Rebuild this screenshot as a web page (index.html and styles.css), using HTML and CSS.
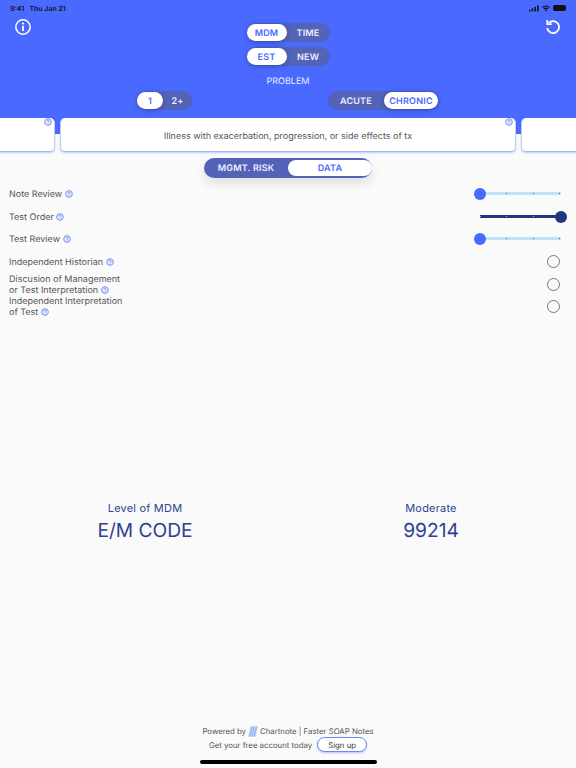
FILE: index.html
```html
<!DOCTYPE html>
<html lang="en">
<head>
    <meta charset="UTF-8">
    <meta name="viewport" content="width=device-width, initial-scale=1.0">
    <title>E/M Code Calculator</title>
    <link rel="stylesheet" href="styles.css">
</head>
<body>
    <svg class="hidden" width="0" height="0">
        <symbol id="help" viewBox="0 0 16 16">
            <circle cx="8" cy="8" r="6.700" fill="#e4e9fd" stroke="currentColor" stroke-width="1.700"/>
            <path d="M5.700 6.300C5.800 4.900 6.800 4.200 8 4.200c1.300 0 2.300.8 2.300 2 0 1-.6 1.500-1.300 2-.7.5-1 .9-1 1.700" fill="none" stroke="currentColor" stroke-width="1.400"/>
            <circle cx="8" cy="11.800" r=".9" fill="currentColor"/>
        </symbol>
    </svg>

    <header class="top">
        <div class="status-bar">
            <span>9:41&nbsp;&nbsp; Thu Jan 21</span>
            <div class="status-icons">
                <svg width="10" height="7" viewBox="0 0 13 8"><path d="M0 5.500h2V8H0zM3.500 4h2v4h-2zM7 2h2v6H7zM10.500 0h2v8h-2z" fill="#111"/></svg>
                <svg width="8" height="7" viewBox="0 0 12 9"><path d="M6 9L4.200 6.900a2.700 2.700 0 0 1 3.600 0zM3.300 5.900L2.100 4.600a5.800 5.800 0 0 1 7.800 0L8.700 5.900a4.100 4.100 0 0 0-5.400 0zM1.300 3.700L0 2.400a8.800 8.800 0 0 1 12 0l-1.300 1.300a7 7 0 0 0-9.400 0z" fill="#111"/></svg>
                <div class="battery"></div>
            </div>
        </div>

        <div class="top-main">
            <svg class="top-icon" width="18" height="18" viewBox="0 0 18 18">
                <circle cx="9" cy="9" r="7.200" fill="none" stroke="#fff" stroke-width="1.500"/>
                <circle cx="9" cy="5.500" r="1.100" fill="#fff"/>
                <path d="M9 7.800v5.200" stroke="#fff" stroke-width="1.800"/>
            </svg>
            <div class="top-toggles">
                <div class="segment">
                    <div class="seg-item seg-on seg-w40">MDM</div>
                    <div class="seg-item seg-w43">TIME</div>
                </div>
                <div class="segment">
                    <div class="seg-item seg-on seg-w40">EST</div>
                    <div class="seg-item seg-w43">NEW</div>
                </div>
                <div class="section-label">PROBLEM</div>
            </div>
            <svg class="top-icon" width="18" height="18" viewBox="0 0 18 18">
                <path d="M4.800 4.900A6 6 0 1 1 3.200 10" fill="none" stroke="#fff" stroke-width="1.800"/>
                <path d="M3.300 2v4.200h4.400" fill="none" stroke="#fff" stroke-width="1.800"/>
            </svg>
        </div>

        <div class="problem-row">
            <div class="segment">
                <div class="seg-item seg-on seg-w26">1</div>
                <div class="seg-item seg-w29">2+</div>
            </div>
            <div class="segment">
                <div class="seg-item seg-w56">ACUTE</div>
                <div class="seg-item seg-on seg-w54">CHRONIC</div>
            </div>
        </div>
    </header>

    <div class="cards">
        <div class="card card-left"><svg class="help card-help"><use href="#help"/></svg></div>
        <div class="card">Illness with exacerbation, progression, or side effects of tx<svg class="help card-help"><use href="#help"/></svg></div>
        <div class="card card-right"></div>
    </div>

    <div class="tab-wrap">
        <div class="tabs">
            <div class="tab">MGMT. RISK</div>
            <div class="tab tab-on">DATA</div>
        </div>
    </div>

    <div class="rows">
        <div class="row">
            <div class="row-label">Note Review <svg class="help"><use href="#help"/></svg></div>
            <div class="slider">
                <div class="track"><i></i><i></i><i></i></div>
                <div class="thumb"></div>
            </div>
        </div>
        <div class="row">
            <div class="row-label">Test Order <svg class="help"><use href="#help"/></svg></div>
            <div class="slider slider-max">
                <div class="track"><i></i><i></i><i></i><i></i></div>
                <div class="thumb"></div>
            </div>
        </div>
        <div class="row">
            <div class="row-label">Test Review <svg class="help"><use href="#help"/></svg></div>
            <div class="slider">
                <div class="track"><i></i><i></i><i></i></div>
                <div class="thumb"></div>
            </div>
        </div>
        <div class="row">
            <div class="row-label">Independent Historian <svg class="help"><use href="#help"/></svg></div>
            <div class="radio"></div>
        </div>
        <div class="row">
            <div class="row-label">Discusion of Management<br>or Test Interpretation <svg class="help"><use href="#help"/></svg></div>
            <div class="radio"></div>
        </div>
        <div class="row">
            <div class="row-label">Independent Interpretation<br>of Test <svg class="help"><use href="#help"/></svg></div>
            <div class="radio"></div>
        </div>
    </div>

    <div class="results">
        <div class="result">
            <div class="result-small">Level of MDM</div>
            <div class="result-big">E/M CODE</div>
        </div>
        <div class="result">
            <div class="result-small">Moderate</div>
            <div class="result-big">99214</div>
        </div>
    </div>

    <footer class="footer">
        <div class="footer-line">Powered by
            <svg class="logo" width="10" height="11" viewBox="0 0 10 11">
                <path d="M2.500 0h7.500L7.500 11H0z" fill="#c3d6f8"/>
                <path d="M3.700 1L2 10M6 1L4.300 10M8.200 1L6.500 10" stroke="#7d9ee8" stroke-width=".7"/>
            </svg>
            Chartnote | Faster SOAP Notes</div>
        <div class="footer-line">Get your free account today <div class="signup">Sign up</div></div>
        <div class="home-bar"></div>
    </footer>
</body>
</html>
```

FILE: styles.css
```css
* {
    box-sizing: border-box;
}
body {
    margin: 0;
    width: 576px;
    height: 768px;
    overflow: hidden;
    display: flex;
    flex-direction: column;
    background-color: #fafafa;
    font-family: Inter, "Liberation Sans", sans-serif;
    color: #555;
    text-rendering: geometricPrecision;
}
.hidden {
    position: absolute;
}
.top {
    height: 134px;
    flex-shrink: 0;
    background-color: #4a69ff;
    color: #fff;
}
.status-bar {
    height: 14px;
    padding: 2px 10px 0 10px;
    display: flex;
    justify-content: space-between;
    align-items: center;
    font-size: 7px;
    font-weight: 600;
    color: #111;
}
.status-icons {
    display: flex;
    align-items: center;
    gap: 3px;
}
.battery {
    width: 13px;
    height: 6px;
    border-radius: 2px;
    background-color: #111;
}
.top-main {
    display: flex;
    justify-content: space-between;
    padding: 0 14px;
}
.top-icon {
    margin-top: 4px;
}
.top-toggles {
    padding-top: 9px;
    display: flex;
    flex-direction: column;
    align-items: center;
    gap: 5px;
}
.section-label {
    font-size: 9px;
    line-height: 12px;
    margin-top: 5px;
    color: #e8ecff;
}
.problem-row {
    margin-top: 3px;
    padding: 0 137px;
    display: flex;
    justify-content: space-between;
}
.segment {
    display: flex;
    height: 19px;
    border-radius: 10px;
    background-color: #5263b8;
    font-size: 9px;
    font-weight: 600;
    letter-spacing: .2px;
}
.seg-item {
    display: flex;
    align-items: center;
    justify-content: center;
    padding-top: 1px;
    color: #eef0fb;
    border-radius: 10px;
}
.seg-on {
    margin: 1px 0;
    height: 17px;
    background-color: #fff;
    color: #4a69ff;
    box-shadow: 0 1px 5px rgba(30, 40, 110, .45);
}
.seg-w26 { width: 26px; }
.seg-w29 { width: 29px; }
.seg-w40 { width: 40px; }
.seg-w43 { width: 43px; }
.seg-w54 { width: 54px; margin-right: 1px; }
.seg-w56 { width: 56px; }
.cards {
    margin-top: -16px;
    height: 34px;
    display: grid;
    grid-template-columns: 55px 456px 55px;
    column-gap: 5px;
    flex-shrink: 0;
}
.card {
    position: relative;
    display: flex;
    align-items: center;
    justify-content: center;
    padding-top: 3px;
    background-color: #fff;
    border-radius: 5px;
    border-bottom: 1px solid #a8b4ee;
    border-right: 1px solid #c4ccf4;
    border-left: 1px solid #c4ccf4;
    box-shadow: 0 1px 2px rgba(74, 105, 255, .35);
    font-size: 9px;
}
.card-left {
    border-left: none;
    border-radius: 0 5px 5px 0;
}
.card-right {
    border-right: none;
    border-radius: 5px 0 0 5px;
}
.help {
    width: 8px;
    height: 8px;
    color: #6a82ef;
    vertical-align: -1px;
}
.card-help {
    position: absolute;
    top: 0;
    right: 2px;
}
.tab-wrap {
    display: flex;
    justify-content: center;
    margin-top: 6px;
}
.tabs {
    width: 168px;
    height: 20px;
    display: flex;
    border-radius: 10px;
    background-color: #5263b8;
    font-size: 9px;
    font-weight: 600;
    letter-spacing: .2px;
    box-shadow: 0 6px 10px rgba(60, 60, 60, .12);
}
.tab {
    flex: 0 0 84px;
    display: flex;
    align-items: center;
    justify-content: center;
    padding-top: 1px;
    color: #eef0fb;
}
.tab-on {
    margin: 2px 2px 2px 0;
    border-radius: 9px;
    background-color: #fff;
    color: #4a69ff;
}
.rows {
    margin-top: 5px;
    padding: 0 16px 0 9px;
}
.row {
    height: 22.500px;
    display: flex;
    align-items: center;
    justify-content: space-between;
}
.row-label {
    padding-top: 3px;
    font-size: 9px;
    line-height: 10.800px;
}
.slider {
    position: relative;
    width: 93px;
    margin-right: -7px;
    height: 12px;
}
.track {
    position: absolute;
    top: 4px;
    left: 6px;
    width: 81px;
    height: 3px;
    background-color: #bfe2fb;
}
.track i {
    position: absolute;
    top: 1px;
    width: 1px;
    height: 1px;
    background-color: #44568f;
}
.track i:nth-child(1) { left: 26px; }
.track i:nth-child(2) { left: 53px; }
.track i:nth-child(3) { left: 79px; }
.track i:nth-child(4) { left: 0; }
.thumb {
    position: absolute;
    top: 0;
    left: 0;
    width: 12px;
    height: 12px;
    border-radius: 50%;
    background-color: #4a69ff;
}
.slider-max .track {
    top: 4.500px;
    height: 3px;
    background-color: #24357f;
}
.slider-max .track i {
    top: 1px;
    background-color: #a8b6e8;
}
.slider-max .thumb {
    left: 81px;
    background-color: #24357f;
}
.radio {
    width: 13px;
    height: 13px;
    border-radius: 50%;
    border: 1.500px solid #777;
    margin-right: .5px;
}
.results {
    margin-top: 183px;
    padding: 0 2px;
    display: grid;
    grid-template-columns: 1fr 1fr;
}
.result {
    text-align: center;
    color: #2f3f92;
}
.result-small {
    font-size: 11px;
    line-height: 14px;
    letter-spacing: .2px;
}
.result-big {
    margin-top: 3px;
    font-size: 19.200px;
    line-height: 24px;
}
.footer {
    margin-top: auto;
    padding-bottom: 4px;
    display: flex;
    flex-direction: column;
    align-items: center;
    font-size: 7.800px;
}
.footer-line {
    display: flex;
    align-items: center;
    gap: 2px;
    height: 12px;
}
.footer-line + .footer-line {
    height: 15px;
}
.logo {
    flex-shrink: 0;
}
.signup {
    width: 50px;
    height: 15px;
    margin-left: 3px;
    display: flex;
    align-items: center;
    justify-content: center;
    border-radius: 8px;
    background-color: #fff;
    border: 1px solid #6f86ee;
    color: #333;
    box-shadow: 0 1px 2px rgba(74, 105, 255, .4);
}
.home-bar {
    width: 177px;
    height: 4px;
    margin-top: 8px;
    border-radius: 2px;
    background-color: #000;
}
```
